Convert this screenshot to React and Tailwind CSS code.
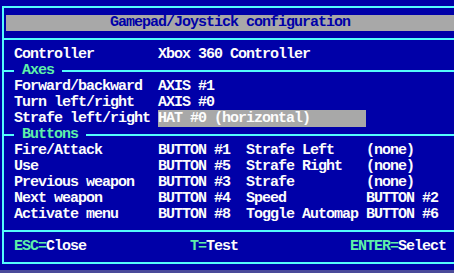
import React from "react";

const W = "text-[#fcfcfc]";
const G = "text-[#5ef0a8]";

function LineRow() {
  return (
    <div className="h-[16px] flex items-center">
      <div className="h-[2px] w-full bg-[#54fcfc]" />
    </div>
  );
}

function Section({ label }) {
  return (
    <div className="h-[16px] flex items-center">
      <div className="h-[2px] w-[10px] bg-[#54fcfc]" />
      <span className={`ml-[8px] mr-[8px] ${G} leading-[16px]`}>{label}</span>
      <div className="h-[2px] flex-1 bg-[#54fcfc]" />
    </div>
  );
}

function Row({ children }) {
  return (
    <div className={`h-[16px] leading-[16px] pl-[10px] whitespace-pre ${W}`}>{children}</div>
  );
}

export default function App() {
  return (
    <div className="w-[454px] h-[273px] overflow-hidden bg-[#0000a8] flex flex-col font-['Liberation_Mono',monospace] font-bold text-[15px] tracking-[-1px]">
      <div className="mt-[6px] ml-[2px] w-[470px] border-l-2 border-t-2 border-b-2 border-[#54fcfc] flex flex-col pt-[7px] pb-[7px]">
        <div className="ml-[2px] h-[16px] leading-[16px] bg-[#a8a8a8] text-[#0000a8] pl-[104px] whitespace-pre">
          Gamepad/Joystick configuration
        </div>
        <LineRow />
        <Row>{"Controller        Xbox 360 Controller"}</Row>
        <Section label="Axes" />
        <Row>{"Forward/backward  AXIS #1"}</Row>
        <Row>{"Turn left/right   AXIS #0"}</Row>
        <Row>
          {"Strafe left/right "}
          <span className="bg-[#a8a8a8]">{"HAT #0 (horizontal)       "}</span>
        </Row>
        <Section label="Buttons" />
        <Row>{"Fire/Attack       BUTTON #1  Strafe Left    (none)"}</Row>
        <Row>{"Use               BUTTON #5  Strafe Right   (none)"}</Row>
        <Row>{"Previous weapon   BUTTON #3  Strafe         (none)"}</Row>
        <Row>{"Next weapon       BUTTON #4  Speed          BUTTON #2"}</Row>
        <Row>{"Activate menu     BUTTON #8  Toggle Automap BUTTON #6"}</Row>
        <LineRow />
        <Row>
          <span className={G}>ESC=</span>
          {"Close             "}
          <span className={G}>T=</span>
          {"Test              "}
          <span className={G}>ENTER=</span>
          {"Select"}
        </Row>
      </div>
      <div className="mt-[6px] h-[3px] bg-[#4a4a9a]" />
    </div>
  );
}
